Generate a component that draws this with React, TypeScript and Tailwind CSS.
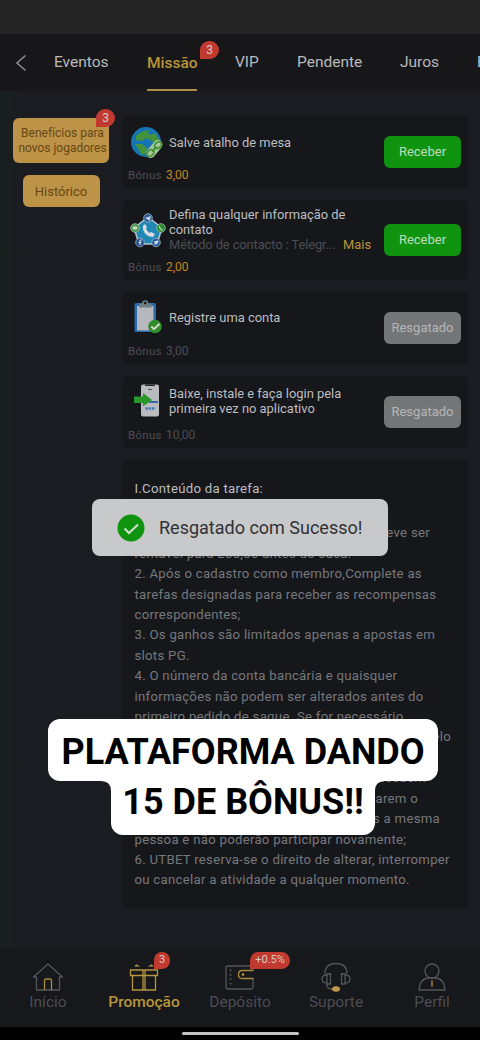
import type { ReactNode } from "react";

const tasks = [
  { icon: <GlobeIcon />, title: ["Salve atalho de mesa"], bonus: "3,00", open: true, iconPos: "mt-[10px]", textPos: "pt-0 pb-0.5" },
  {
    icon: <ContactIcon />,
    title: ["Defina qualquer informação de", "contato"],
    note: "Método de contacto : Telegr...",
    bonus: "2,00",
    open: true,
    iconPos: "mt-[13px]",
    textPos: "pt-[5px]",
  },
  { icon: <ClipboardIcon />, title: ["Registre uma conta"], bonus: "3,00", open: false, iconPos: "mt-2", textPos: "pb-1" },
  {
    icon: <PhoneIcon />,
    title: ["Baixe, instale e faça login pela", "primeira vez no aplicativo"],
    bonus: "10,00",
    open: false,
    iconPos: "mt-1.5",
    textPos: "pb-1",
  },
];

const rules = [
  { text: "1. O bônus desta tarefa de membro deve ser", pos: "text-right pr-[26px]" },
  { text: "rentável para 200,00 antes do saca." },
  { text: "2. Após o cadastro como membro,Complete as" },
  { text: "tarefas designadas para receber as recompensas" },
  { text: "correspondentes;" },
  { text: "3. Os ganhos são limitados apenas a apostas em" },
  { text: "slots PG." },
  { text: "4. O número da conta bancária e quaisquer" },
  { text: "informações não podem ser alterados antes do" },
  { text: "primeiro pedido de saque. Se for necessário" },
  { text: "alterar, deve ser feito e confirmado pelo", pos: "text-right pr-[5px]" },
  { text: "suporte da plataforma;" },
  { text: "5. Membros que possuem", pos: "text-right pr-[30px]" },
  { text: "várias contas ou que usarem o", pos: "text-right pr-[38px]" },
  { text: "mesmo IP são considerados a mesma", pos: "text-right pr-[16px]" },
  { text: "pessoa e não poderão participar novamente;" },
  { text: "6. UTBET reserva-se o direito de alterar, interromper" },
  { text: "ou cancelar a atividade a qualquer momento." },
];

function GlobeIcon() {
  return (
    <svg viewBox="0 0 36 36" className="h-9 w-9">
      <circle cx="16" cy="16" r="15" fill="#1674b5" />
      <path d="M6 10q5-6 14-6l-3 3 6 3-1 5-6-3-4 3-6-1z" fill="#43933a" />
      <path d="M21 9l4-2 4 6-1 5-5-2-3-4zM5 18l7 0 5 4-1 5-4 2-3-5z" fill="#43933a" />
      <path d="M20.500 27.500l7.500-9" stroke="#a8c8a0" strokeWidth="9" strokeLinecap="round" />
      <g fill="none" stroke="#438f33" strokeWidth="1.800">
        <ellipse cx="20.500" cy="27" rx="4" ry="2.800" transform="rotate(-42 20.500 27)" />
        <ellipse cx="28" cy="19.200" rx="4" ry="2.800" transform="rotate(-42 28 19.200)" />
        <path d="M22 25.500l4.700-5" />
      </g>
    </svg>
  );
}

function ContactIcon() {
  return (
    <svg viewBox="0 0 36 36" className="h-9 w-9">
      <path d="M18 4l14 11-5 16H9L4 15z" fill="#2187b5" stroke="#b8c6cf" strokeWidth="1.500" strokeLinejoin="round" />
      <path d="M13 13c-1 6 4 11 10 11l2-3-4-2-2 1-3-4 1-2-2-3z" fill="#d5dde2" />
      <g stroke="#a9b5bd" strokeWidth="0.800">
        <circle cx="18" cy="5" r="4.300" fill="#245b9c" />
        <circle cx="5" cy="15" r="4.300" fill="#479a40" />
        <circle cx="31" cy="15" r="4.300" fill="#258c27" />
        <circle cx="10" cy="29.500" r="4.300" fill="#234f91" />
        <circle cx="26" cy="29.500" r="4.300" fill="#235e9e" />
      </g>
      <path d="M15 5l6-2-1.500 5-2-1.500z" fill="#ccd6de" />
      <ellipse cx="5" cy="15" rx="2.500" ry="1.800" fill="#ccd6cc" />
      <path d="M29.500 13c0 2 1.500 4 3.500 4" stroke="#d5dfd5" strokeWidth="1.200" fill="none" />
      <path d="M12 27h-1q-1 0-1 1v4M8.500 29.500h3" stroke="#d5dce5" strokeWidth="1.200" fill="none" />
      <path d="M23.500 28q2 1 3-.5l2 .3q0 4-5 4l1.500-1z" fill="#ccd6de" />
    </svg>
  );
}

function ClipboardIcon() {
  return (
    <svg viewBox="0 0 36 36" className="h-9 w-9">
      <rect x="4.500" y="3" width="21.500" height="29" rx="1.500" fill="#2868ad" />
      <path d="M7 6h16.500v24.500H7z" fill="#b6b8be" />
      <path d="M9 3.500h3a3.200 3.200 0 016.400 0h3.100v4H9z" fill="#6e7f82" />
      <circle cx="15.200" cy="3" r="1.300" fill="#17181c" />
      <circle cx="25" cy="26.500" r="6.800" fill="#318c2b" />
      <path d="M21.300 26.500l2.700 2.700 5.500-5.500" fill="none" stroke="#cfd8cc" strokeWidth="2" />
    </svg>
  );
}

function PhoneIcon() {
  return (
    <svg viewBox="0 0 36 36" className="h-9 w-9">
      <rect x="11" y="2.500" width="18" height="32" rx="2" fill="#b9bbbf" />
      <path d="M15 2.500h10V4H15z" fill="#26282c" />
      <path d="M18 7.500h4" stroke="#55585e" strokeWidth="1.200" />
      <path d="M19 20h9" stroke="#2563a8" strokeWidth="1.800" />
      <path d="M15.500 26.500h9" stroke="#3c7cb9" strokeWidth="2.600" strokeDasharray="2.500 .7" />
      <path d="M4 14.500h9v-3.500l9 7-9 6.500v-3.500H4z" fill="#27972a" />
    </svg>
  );
}

function HomeIcon() {
  return (
    <svg viewBox="0 0 32 32" className="h-8 w-8" fill="none" stroke="#54555a" strokeWidth="1.300">
      <path d="M4.500 29V16H1.500L16 3l14.500 13h-3v13z" strokeLinejoin="round" />
      <path d="M12.500 29V20q0-2 2-2h3q2 0 2 2v9" stroke="#a98b3b" />
    </svg>
  );
}

function GiftIcon() {
  return (
    <svg viewBox="0 0 32 32" className="h-8 w-8" fill="none" stroke="#b5953e" strokeWidth="1.300">
      <path d="M2.500 9h27v5.500h-27zM4.500 14.500h23V29h-23zM15 9v20M17 9v20" />
      <path d="M6.500 5.500q1-4 5.500 0zM25.500 5.500q-1-4-5.500 0z" fill="#b5953e" stroke="none" />
    </svg>
  );
}

function WalletIcon() {
  return (
    <svg viewBox="0 0 32 32" className="h-8 w-8" fill="none" stroke="#54555a" strokeWidth="1.300">
      <path d="M29 9V6.500Q29 5 27.500 5h-24Q2 5 2 6.500v20Q2 28 3.500 28h24q1.500 0 1.500-1.500V18" />
      <path d="M6.500 8.500v16" strokeWidth="1.800" strokeDasharray="1.800 2.600" />
      <path d="M29.500 9.500H18q-3.500 0-3.500 4t3.500 4h11.500" stroke="#a98b3b" />
      <circle cx="19" cy="13.500" r="1.200" fill="#cda640" stroke="none" />
    </svg>
  );
}

function SupportIcon() {
  return (
    <svg viewBox="0 0 32 32" className="h-8 w-8" fill="none" stroke="#54555a" strokeWidth="1.300">
      <path d="M5 13Q5 2.500 16 2.500T27 13" />
      <path d="M10.500 13v10H7V13zM25 13v10h-3.500V13zM7 14q-5 0-5 4t5 4M25 14q5 0 5 4t-5 4M6.500 23q0 5 6 5" />
      <ellipse cx="16" cy="28" rx="4" ry="2.700" fill="#bd984c" stroke="none" />
    </svg>
  );
}

function ProfileIcon() {
  return (
    <svg viewBox="0 0 32 32" className="h-8 w-8" fill="none" stroke="#54555a" strokeWidth="1.300">
      <circle cx="16" cy="10" r="7" />
      <path d="M3 29q1-12 10-12h6q9 0 10 12z" strokeLinejoin="round" />
      <path d="M16 19.500v6" stroke="#b5953e" />
    </svg>
  );
}

function Badge({ children, className }: { children: ReactNode; className: string }) {
  return (
    <span
      className={`absolute flex items-center justify-center rounded-full rounded-bl-none bg-[#c13a30] text-[#d9c9c7] ${className}`}
    >
      {children}
    </span>
  );
}

const nav = [
  { label: "Início", icon: <HomeIcon /> },
  { label: "Promoção", icon: <GiftIcon />, active: true, badge: "3" },
  { label: "Depósito", icon: <WalletIcon />, badge: "+0.5%" },
  { label: "Suporte", icon: <SupportIcon /> },
  { label: "Perfil", icon: <ProfileIcon /> },
];

export default function App() {
  return (
    <div className="relative flex h-[1040px] w-[480px] flex-col overflow-hidden bg-[#1b1c21] font-[Roboto,sans-serif]">
      <div className="h-[34px] shrink-0 bg-[#242424]" />

      {/* Tabs */}
      <header className="flex h-[57px] shrink-0 items-center bg-[#17171a] text-[15.5px] text-[#bababc]">
        <svg viewBox="0 0 12 18" className="ml-[15px] h-[18px] w-3 shrink-0" fill="none" stroke="#8d8d90" strokeWidth="1.600">
          <path d="M10.500 1.500L2 9l8.500 7.500" />
        </svg>
        <span className="ml-[27px] w-[93px] shrink-0">Eventos</span>
        <div className="relative flex h-full w-[50px] shrink-0 items-center border-b-2 border-[#ad8e48] pt-1 font-medium text-[#b9953a]">
          Missão
          <Badge className="left-[53px] top-[7px] h-[18px] w-[19px] text-xs font-normal">3</Badge>
        </div>
        <span className="ml-[38px] w-[62px] shrink-0">VIP</span>
        <span className="w-[103px] shrink-0">Pendente</span>
        <span className="w-[77px] shrink-0">Juros</span>
        <span className="shrink-0">Extra</span>
      </header>

      <main className="flex flex-1 bg-linear-to-r from-[#18201f] to-[#1b1c21] to-5% pt-[25px]">
        {/* Categories */}
        <aside className="ml-[13px] flex w-24 shrink-0 flex-col items-center gap-3 pt-[2px] text-[12px] leading-[15px] text-[#664815]">
          <div className="relative flex h-[45px] w-24 items-center justify-center rounded-md bg-[#bd9347] pl-[3px] text-center">
            <span className="whitespace-nowrap">
              Benefícios para
              <br />
              novos jogadores
            </span>
            <Badge className="left-[83px] -top-[9px] h-[18px] w-[19px] text-xs">3</Badge>
          </div>
          <div className="flex h-8 w-[77px] items-center justify-center rounded-md bg-[#bd9347] text-[13px]">Histórico</div>
        </aside>

        <div className="ml-[13px] flex w-[346px] flex-col gap-3">
          {tasks.map((task, i) => (
            <section key={i} className={`relative flex shrink-0 rounded-md bg-[#16171b] ${task.note ? "h-20" : "h-[72px]"}`}>
              <div className={`ml-2 w-[39px] shrink-0 ${task.iconPos}`}>{task.icon}</div>
              <div
                className={`flex h-[54px] flex-1 flex-col justify-center whitespace-nowrap text-[12.9px] leading-[15px] text-[#bdbdc0] ${task.textPos}`}
              >
                {task.title.map((line) => (
                  <p key={line}>{line}</p>
                ))}
                {task.note && (
                  <p className="flex text-[#4c4d52]">
                    <span className="w-[174px] tracking-[-0.1px]">{task.note}</span>
                    <span className="text-[#b9953a]">Mais</span>
                  </p>
                )}
              </div>
              <div className="absolute bottom-1.5 left-1.5 flex gap-[5px] text-xs leading-[14px] text-[#4c4d52]">
                <span className="w-[33px] text-[11.5px] tracking-[0.3px]">Bônus</span>
                <span className={task.open ? "text-[#c4871d]" : ""}>{task.bonus}</span>
              </div>
              <button
                className={`mr-[7px] h-8 w-[77px] shrink-0 self-center rounded-md text-[13px] ${
                  task.open ? "bg-[#109410] text-[#bddcbd]" : "bg-[#747577] text-[#b4b5b7]"
                }`}
              >
                {task.open ? "Receber" : "Resgatado"}
              </button>
            </section>
          ))}

          <section className="h-[448px] shrink-0 whitespace-nowrap rounded-md bg-[#16171b] pl-[12.500px] pr-3 pt-[19px] text-[13.2px] leading-[20.4px] tracking-[0.27px] text-[#77787c]">
            <h2 className="mb-6 text-[#bdbdc0]">I.Conteúdo da tarefa:</h2>
            {rules.map((rule) => (
              <p key={rule.text} className={rule.pos}>
                {rule.text}
              </p>
            ))}
          </section>
        </div>
      </main>

      <nav className="grid h-[79px] shrink-0 grid-cols-5 bg-[#17181c] text-[#4c4d52]">
        {nav.map((item) => (
          <div key={item.label} className="relative flex flex-col items-center pt-[13px]">
            {item.icon}
            <span className={`text-[15.5px] leading-[18px] ${item.active ? "font-medium text-[#b9953a]" : ""}`}>{item.label}</span>
            {item.badge && (
              <Badge className={`left-[58px] top-1 h-[17px] text-[11px] ${item.badge === "3" ? "w-4" : "w-10"}`}>
                {item.badge}
              </Badge>
            )}
          </div>
        ))}
      </nav>
      <div className="flex h-[13px] shrink-0 justify-center bg-black pt-[5px]">
        <div className="h-[3px] w-[117px] rounded-full bg-[#c4c4c6]" />
      </div>

      {/* Toast */}
      <div className="absolute left-[92px] top-[499px] flex h-[57px] w-[296px] items-center rounded-lg bg-[#c8c9cb] text-lg text-[#303135]">
        <svg viewBox="0 0 28 28" className="ml-[25px] mr-[14px] h-7 w-7">
          <circle cx="14" cy="14" r="13.500" fill="#109410" />
          <path d="M7.500 14.500l4.500 4.500 9-8.500" fill="none" stroke="#d3ddd3" strokeWidth="2" />
        </svg>
        <span className="whitespace-nowrap">Resgatado com Sucesso!</span>
      </div>

      {/* Caption */}
      <div className="absolute left-12 top-[719px] flex w-[390px] flex-col items-center whitespace-nowrap text-[36px] font-bold text-black">
        <div className="flex h-[62px] w-full items-center justify-center rounded-xl bg-white pt-1">PLATAFORMA DANDO</div>
        <div className="relative flex h-[54px] w-[264px] justify-center rounded-b-xl bg-white leading-[43px]">
          15 DE BÔNUS!!
          <svg viewBox="0 0 10 10" className="absolute -left-2.5 top-0 h-2.5 w-2.5" fill="#fff">
            <path d="M0 0h10v10Q10 0 0 0z" />
          </svg>
          <svg viewBox="0 0 10 10" className="absolute -right-2.5 top-0 h-2.5 w-2.5" fill="#fff">
            <path d="M10 0H0v10Q0 0 10 0z" />
          </svg>
        </div>
      </div>
    </div>
  );
}
